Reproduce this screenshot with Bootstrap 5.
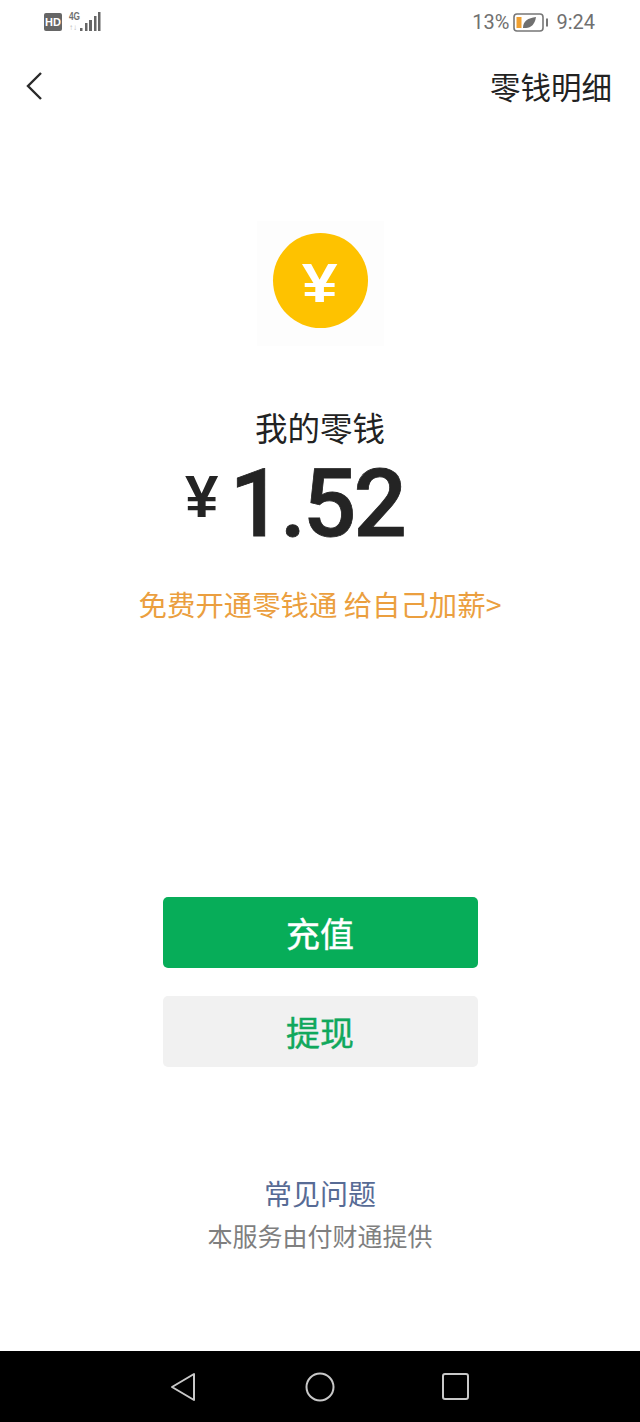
<!DOCTYPE html>
<html lang="zh-CN">
<head>
    <meta charset="UTF-8">
    <meta name="viewport" content="width=device-width, initial-scale=1.0">
    <title>我的零钱</title>
    <link href="https://cdn.jsdelivr.net/npm/bootstrap@5.3.0/dist/css/bootstrap.min.css" rel="stylesheet">
    <style>
        body {
            font-family: "Noto Sans CJK SC", "Liberation Sans", sans-serif;
            background: #fff;
        }
        .phone-screen { height: 1422px; }
        .status-row { height: 44px; padding: 11px 45px 0 44px; color: #6b6b6b; }
        .hd-tag {
            width: 18px; height: 18px; border-radius: 2px; background: #666; color: #fff;
            font: 700 11px/18px "Liberation Sans", sans-serif; text-align: center;
        }
        .status-text { font: 400 20px/22px Roboto, sans-serif; color: #707070; }
        .top-bar { height: 84px; padding: 0 28px 0 24px; }
        .page-title { font-size: 30.5px; line-height: 40px; color: #222; }
        .coin-box { margin-top: 93px; padding: 12px 16px 18px; background: #fdfdfd; }
        .coin {
            width: 95px; height: 95px; border-radius: 50%; background: #fec200; color: #fff;
            font: 700 56px/99px "Liberation Sans", sans-serif; text-align: center;
        }
        .coin-sign { display: inline-block; transform: scaleX(1.15); }
        .balance-label { margin-top: 59px; font-size: 32.5px; line-height: 44px; color: #222; }
        .balance-row { height: 90px; margin: 10px 51px 0 0; color: #242424; }
        .balance-sign { font: 700 60px/60px "Liberation Sans", sans-serif; margin-right: 11px; margin-top: -14px; }
        .balance-num { font: 500 94px/90px Roboto, sans-serif; letter-spacing: -3px; -webkit-text-stroke: .8px #242424; }
        .promo-link { margin-top: 35px; font-size: 28.4px; line-height: 40px; color: #eb9f3f; text-decoration: none; }
        .action-stack { margin-top: 273px; gap: 28px; }
        .action-btn {
            width: 315px; height: 71px; border: 0; border-radius: 5px;
            font-size: 34px; line-height: 71px; padding: 0; -webkit-text-stroke: .4px;
        }
        .btn-charge, .btn-charge:hover { background: #07ad59; color: #fff; }
        .btn-withdraw, .btn-withdraw:hover { background: #f1f1f1; color: #10a85c; }
        .help-link { margin-top: 106px; font-size: 28px; line-height: 40px; color: #576b95; text-decoration: none; }
        .service-note { margin-top: 3px; font-size: 25px; line-height: 38px; color: #7f7f7f; }
        .nav-strip { height: 71px; background: #000; padding-left: 170px; }
        .nav-home { margin: 0 107px 0 109px; }
    </style>
</head>
<body>
    <div class="phone-screen d-flex flex-column">
        <div class="status-row d-flex justify-content-between align-items-start">
            <div class="d-flex align-items-center gap-1">
                <div class="hd-tag">HD</div>
                <svg width="35" height="22" viewBox="0 0 35 22">
                    <text x="3" y="9" font-family="Liberation Sans" font-size="11.5" font-weight="700" fill="#707070" textLength="11" lengthAdjust="spacingAndGlyphs">4G</text>
                    <text x="3" y="19" font-family="Liberation Sans" font-size="8" font-weight="700" fill="#bbb">↑↓</text>
                    <g fill="#666">
                        <rect x="14" y="17" width="2.500" height="3"/>
                        <rect x="19" y="12" width="2.500" height="8"/>
                        <rect x="23" y="9" width="3" height="11"/>
                        <rect x="28" y="5" width="2.500" height="15"/>
                        <rect x="32" y="1" width="2.500" height="19"/>
                    </g>
                </svg>
            </div>
            <div class="d-flex align-items-center status-text">
                <span>13%</span>
                <svg class="ms-1 me-2" width="35" height="19" viewBox="0 0 35 19">
                    <rect x="1" y="1" width="29" height="17" rx="3" fill="none" stroke="#777" stroke-width="1.6"/>
                    <rect x="3.500" y="4" width="5" height="11" fill="#f0a030"/>
                    <path d="M10 15c0-7 5-10 13-11-1 7-5 11-10 11l-3 0z" fill="#707070"/>
                    <rect x="33" y="5.500" width="2" height="8" fill="#777"/>
                </svg>
                <span>9:24</span>
            </div>
        </div>

        <div class="top-bar d-flex justify-content-between align-items-center">
            <svg width="20" height="30" viewBox="0 0 20 30">
                <path d="M17 2 4 15l13 13" fill="none" stroke="#2a2a2a" stroke-width="2.400"/>
            </svg>
            <div class="page-title">零钱明细</div>
        </div>

        <main class="flex-grow-1 d-flex flex-column align-items-center">
            <div class="coin-box"><div class="coin"><span class="coin-sign">¥</span></div></div>
            <div class="balance-label">我的零钱</div>
            <div class="balance-row d-flex align-items-center">
                <span class="balance-sign">¥</span>
                <span class="balance-num">1.52</span>
            </div>
            <a class="promo-link" href="#">免费开通零钱通 给自己加薪&gt;</a>
            <div class="action-stack d-flex flex-column">
                <button class="btn action-btn btn-charge">充值</button>
                <button class="btn action-btn btn-withdraw">提现</button>
            </div>
            <a class="help-link" href="#">常见问题</a>
            <div class="service-note">本服务由付财通提供</div>
        </main>

        <div class="nav-strip d-flex align-items-center">
            <svg width="26" height="30" viewBox="0 0 26 30">
                <path d="M24 2v26L2 15z" fill="none" stroke="#c8c8c8" stroke-width="2" stroke-linejoin="round"/>
            </svg>
            <svg class="nav-home" width="30" height="30" viewBox="0 0 30 30">
                <circle cx="15" cy="15" r="13.500" fill="none" stroke="#c8c8c8" stroke-width="2"/>
            </svg>
            <svg width="27" height="27" viewBox="0 0 27 27">
                <rect x="1" y="1" width="25" height="25" rx="2" fill="none" stroke="#c8c8c8" stroke-width="2"/>
            </svg>
        </div>
    </div>
    <script src="https://cdn.jsdelivr.net/npm/bootstrap@5.3.0/dist/js/bootstrap.bundle.min.js"></script>
</body>
</html>
